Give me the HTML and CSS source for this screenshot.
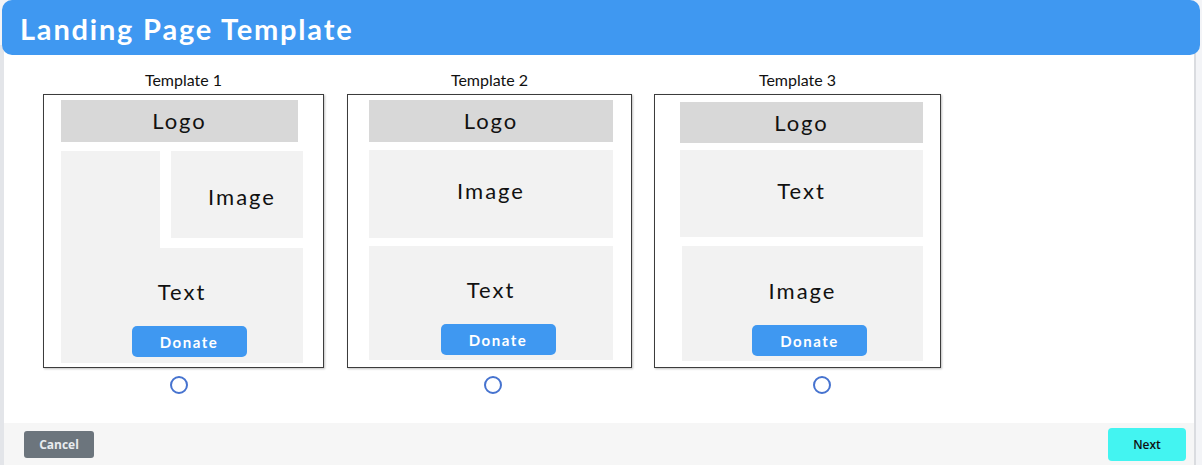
FILE: index.html
```html
<!DOCTYPE html>
<html lang="en">
<head>
<meta charset="utf-8">
<title>Landing Page Template</title>
<link rel="stylesheet" href="styles.css">
</head>
<body>
<div class="modal">
  <header class="modal-header">
    <h1 class="modal-title">Landing Page Template</h1>
  </header>
  <div class="modal-frame">
    <main class="modal-body">
      <div class="templates">
        <section class="tpl tpl-1">
          <div class="tpl-name">Template 1</div>
          <div class="card card-1">
            <div class="box logo logo-1">Logo</div>
            <div class="lshape">
              <div class="lshape-top">
                <div class="lshape-spacer"></div>
                <div class="lshape-imgwrap"><div class="box image-1">Image</div></div>
              </div>
              <div class="lshape-bottom">
                <div class="box-label">Text</div>
                <button class="donate">Donate</button>
              </div>
            </div>
          </div>
          <span class="radio radio-1"></span>
        </section>

        <section class="tpl tpl-2">
          <div class="tpl-name">Template 2</div>
          <div class="card card-2">
            <div class="box logo logo-2">Logo</div>
            <div class="box block block-mid-2">Image</div>
            <div class="box block block-end block-end-2">
              <div class="box-label">Text</div>
              <button class="donate">Donate</button>
            </div>
          </div>
          <span class="radio radio-2"></span>
        </section>

        <section class="tpl tpl-3">
          <div class="tpl-name">Template 3</div>
          <div class="card card-3">
            <div class="box logo logo-3">Logo</div>
            <div class="box block block-mid-3">Text</div>
            <div class="box block block-end block-end-3">
              <div class="box-label">Image</div>
              <button class="donate">Donate</button>
            </div>
          </div>
          <span class="radio radio-3"></span>
        </section>
      </div>
    </main>
    <footer class="modal-footer">
      <button class="btn btn-cancel">Cancel</button>
      <button class="btn btn-next">Next</button>
    </footer>
  </div>
</div>
</body>
</html>
```

FILE: styles.css
```css
html, body {
  margin: 0;
  padding: 0;
  background: #f3f4f7;
}

body {
  width: 1202px;
  height: 465px;
  overflow: hidden;
  font-family: Lato, "Noto Sans", sans-serif;
  color: #111;
}

.modal {
  display: flex;
  flex-direction: column;
  width: 1202px;
  height: 465px;
}

.modal-header {
  margin: 0 2px;
  height: 55px;
  flex: none;
  background: #3f98f1;
  border-radius: 10px;
  display: flex;
  align-items: center;
  padding-left: 18px;
  position: relative;
  z-index: 1;
}

.modal-title {
  margin: 0;
  font-size: 29px;
  font-weight: 700;
  color: #fff;
  letter-spacing: 1.8px;
  line-height: 1;
  padding-top: 1px;
}

.modal-frame {
  flex: 1;
  display: flex;
  flex-direction: column;
  margin-top: -10px;
  margin-right: 6px;
  border-left: 4px solid #e3e5e9;
  border-right: 2px solid #dadce0;
  background: #fff;
}

.modal-body {
  flex: 1;
  padding: 25px 0 0 39px;
}

.templates {
  display: flex;
  align-items: flex-start;
}

.tpl {
  display: flex;
  flex-direction: column;
}

.tpl-1 { width: 281px; margin-right: 23px; }
.tpl-2 { width: 285px; margin-right: 22px; }
.tpl-3 { width: 287px; }

.tpl-name {
  text-align: center;
  font-size: 16px;
  line-height: 20px;
  height: 20px;
  margin-bottom: 4px;
}

.card {
  height: 274px;
  box-sizing: border-box;
  border: 1px solid #3c3c3c;
  box-shadow: 1px 1px 2px rgba(0, 0, 0, 0.25);
  background: #fff;
  display: flex;
  flex-direction: column;
}

.box {
  display: flex;
  align-items: center;
  justify-content: center;
  font-size: 22px;
  line-height: 24px;
  letter-spacing: 2px;
  color: #111;
}

.logo {
  background: #d8d8d8;
  flex: none;
}

.block {
  background: #f2f2f2;
  flex: none;
}

.box-label {
  font-size: 22px;
  line-height: 24px;
  letter-spacing: 2px;
  color: #111;
  margin-bottom: 22px;
}

.donate {
  width: 115px;
  height: 31px;
  margin-left: 14px;
  border: 0;
  border-radius: 5px;
  background: #3f98f1;
  color: #fff;
  font-family: Lato, "Noto Sans", sans-serif;
  font-size: 15px;
  font-weight: 700;
  letter-spacing: 1.5px;
  padding: 0;
}

/* Card 1 */
.card-1 {
  padding: 5px 0 0 17px;
}

.logo-1 {
  width: 237px;
  height: 42px;
  margin-bottom: 9px;
}

.lshape {
  width: 242px;
  height: 212px;
  background: #f2f2f2;
  display: flex;
  flex-direction: column;
}

.lshape-top {
  display: flex;
  height: 97px;
  flex: none;
}

.lshape-spacer {
  width: 99px;
}

.lshape-imgwrap {
  flex: 1;
  background: #fff;
  padding: 0 0 10px 11px;
  display: flex;
}

.image-1 {
  flex: 1;
  background: #f2f2f2;
  padding-left: 10px;
  padding-top: 4px;
}

.lshape-bottom {
  flex: 1;
  display: flex;
  flex-direction: column;
  align-items: center;
  justify-content: flex-end;
  padding-bottom: 6px;
}

/* Card 2 */
.card-2 {
  padding: 5px 18px 0 21px;
  gap: 8px;
}

.logo-2 { height: 42px; }
.block-mid-2 { height: 88px; padding-bottom: 6px; box-sizing: border-box; }
.block-end-2 { height: 114px; }

/* Card 3 */
.card-3 {
  padding: 7px 17px 0 25px;
}

.logo-3 { height: 41px; margin-bottom: 7px; }
.block-mid-3 { height: 87px; margin-bottom: 9px; padding-bottom: 6px; box-sizing: border-box; }
.block-end-3 { height: 115px; margin-left: 2px; }

.block-end {
  flex-direction: column;
  justify-content: flex-end;
  padding-bottom: 5px;
  box-sizing: border-box;
}

/* Radios */
.radio {
  display: block;
  width: 18px;
  height: 18px;
  box-sizing: border-box;
  border: 2px solid #4673cf;
  border-radius: 50%;
  margin-top: 8px;
  align-self: flex-start;
}

.radio-1 { margin-left: 127px; }
.radio-2 { margin-left: 137px; }
.radio-3 { margin-left: 159px; }

/* Footer */
.modal-footer {
  height: 42px;
  flex: none;
  background: #f6f6f6;
  display: flex;
  align-items: center;
  justify-content: space-between;
  padding: 0 8px 0 20px;
}

.btn {
  border: 0;
  font-family: "Open Sans", "Noto Sans", sans-serif;
  font-size: 12px;
  padding: 0;
  cursor: pointer;
}

.btn-cancel {
  width: 70px;
  height: 27px;
  border-radius: 3px;
  background: #6c757d;
  color: #e9ecef;
  font-weight: 700;
}

.btn-next {
  width: 78px;
  height: 33px;
  border-radius: 4px;
  background: #43f4f1;
  color: #111;
  font-weight: 600;
}
```
